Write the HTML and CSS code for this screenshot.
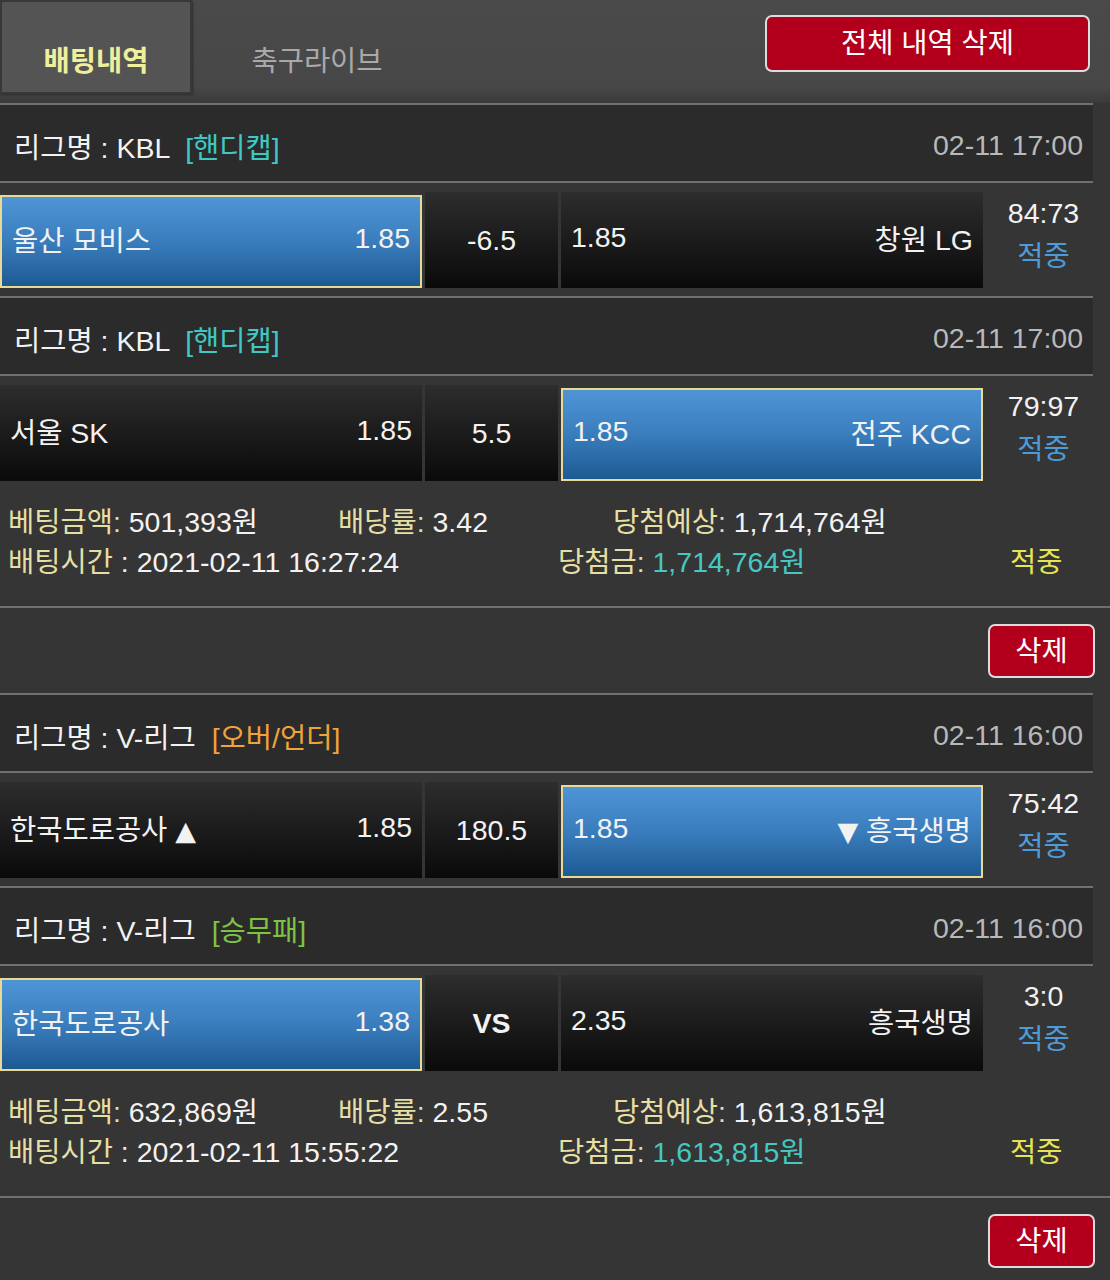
FILE: index.html
```html
<!doctype html>
<html lang="ko">
    <head>
        <meta charset="UTF-8" />
        <meta name="viewport" content="width=device-width, initial-scale=1.0" />
        <title>배팅내역</title>
        <link rel="stylesheet" href="styles.css">
    </head>
    <body>
        <div class="top-bar">
            <div class="tab active">배팅내역</div>
            <div class="tab">축구라이브</div>
            <div class="btn-delete-all">전체 내역 삭제</div>
        </div>

        <!-- bet 1 -->
        <div class="game">
            <div class="league-head">
                <div>리그명 : KBL <span class="type handicap">[핸디캡]</span></div>
                <div class="date">02-11 17:00</div>
            </div>
            <div class="match-row">
                <div class="pick selected"><span>울산 모비스</span><span>1.85</span></div>
                <div class="line-cell">-6.5</div>
                <div class="pick"><span>1.85</span><span>창원 LG</span></div>
                <div class="score"><div>84:73</div><div class="hit">적중</div></div>
            </div>
        </div>
        <div class="game">
            <div class="league-head">
                <div>리그명 : KBL <span class="type handicap">[핸디캡]</span></div>
                <div class="date">02-11 17:00</div>
            </div>
            <div class="match-row last">
                <div class="pick"><span>서울 SK</span><span>1.85</span></div>
                <div class="line-cell">5.5</div>
                <div class="pick selected"><span>1.85</span><span>전주 KCC</span></div>
                <div class="score"><div>79:97</div><div class="hit">적중</div></div>
            </div>
        </div>
        <div class="summary">
            <div class="sum-row">
                <div class="c1"><span class="lbl">베팅금액:</span> 501,393원</div>
                <div class="c2"><span class="lbl">배당률:</span> 3.42</div>
                <div><span class="lbl">당첨예상:</span> 1,714,764원</div>
            </div>
            <div class="sum-row">
                <div class="c1 wide"><span class="lbl">배팅시간</span> : 2021-02-11 16:27:24</div>
                <div class="c3"><span class="lbl">당첨금:</span> <span class="won">1,714,764원</span></div>
                <div class="result">적중</div>
            </div>
        </div>
        <div class="delete-row"><div class="btn-delete">삭제</div></div>

        <!-- bet 2 -->
        <div class="game">
            <div class="league-head">
                <div>리그명 : V-리그 <span class="type overunder">[오버/언더]</span></div>
                <div class="date">02-11 16:00</div>
            </div>
            <div class="match-row">
                <div class="pick"><span>한국도로공사 <span class="tri">▲</span></span><span>1.85</span></div>
                <div class="line-cell">180.5</div>
                <div class="pick selected"><span>1.85</span><span><span class="tri">▼</span> 흥국생명</span></div>
                <div class="score"><div>75:42</div><div class="hit">적중</div></div>
            </div>
        </div>
        <div class="game">
            <div class="league-head">
                <div>리그명 : V-리그 <span class="type winlose">[승무패]</span></div>
                <div class="date">02-11 16:00</div>
            </div>
            <div class="match-row last">
                <div class="pick selected"><span>한국도로공사</span><span>1.38</span></div>
                <div class="line-cell vs">VS</div>
                <div class="pick"><span>2.35</span><span>흥국생명</span></div>
                <div class="score"><div>3:0</div><div class="hit">적중</div></div>
            </div>
        </div>
        <div class="summary">
            <div class="sum-row">
                <div class="c1"><span class="lbl">베팅금액:</span> 632,869원</div>
                <div class="c2"><span class="lbl">배당률:</span> 2.55</div>
                <div><span class="lbl">당첨예상:</span> 1,613,815원</div>
            </div>
            <div class="sum-row">
                <div class="c1 wide"><span class="lbl">배팅시간</span> : 2021-02-11 15:55:22</div>
                <div class="c3"><span class="lbl">당첨금:</span> <span class="won">1,613,815원</span></div>
                <div class="result">적중</div>
            </div>
        </div>
        <div class="delete-row"><div class="btn-delete">삭제</div></div>
    </body>
</html>
```

FILE: styles.css
```css
body {
    margin: 0;
    padding: 0;
    background-color: #353535;
    color: #f2f2f2;
    font-family: "Liberation Sans", "Noto Sans CJK KR", sans-serif;
    font-size: 28.5px;
}

.top-bar {
    display: flex;
    align-items: flex-start;
    height: 103px;
    background: linear-gradient(#4a4a4a, #474747 85%, #3a3a3a);
}

.tab {
    width: 250px;
    height: 94px;
    line-height: 122px;
    text-align: center;
    color: #a9a9a9;
}

.tab.active {
    width: 192px;
    background-color: #545454;
    box-shadow: inset 0 0 0 2px #383838, 1px 1px 2px #2c2c2c;
    color: #eef09c;
    font-weight: bold;
}

.btn-delete-all {
    margin: 15px 20px 0 auto;
    width: 321px;
    height: 53px;
    line-height: 53px;
    text-align: center;
    background-color: #b2001c;
    border: 2px solid #dcdcdc;
    border-radius: 7px;
    color: #fff;
}

.game {
    margin-right: 17px;
    border-top: 2px solid #707070;
}

.league-head {
    display: flex;
    justify-content: space-between;
    align-items: center;
    height: 71px;
    padding: 5px 10px 0 14px;
    background-color: #2b2b2b;
    border-bottom: 2px solid #707070;
}

.type {
    margin-left: 8px;
}
.handicap {
    color: #3fc9c4;
}
.overunder {
    color: #f0a33a;
}
.winlose {
    color: #7ec342;
}

.date {
    color: #b9b9b9;
}

.match-row {
    display: flex;
    gap: 3px;
    padding: 9px 0 8px;
}

.match-row.last {
    padding-bottom: 0;
}

.pick {
    width: 422px;
    height: 96px;
    box-sizing: border-box;
    display: flex;
    justify-content: space-between;
    align-items: center;
    padding: 0 10px 6px;
    background: linear-gradient(#2d2d2d, #0a0a0a);
}

.pick.selected {
    border: 2px solid #e8d995;
    margin-top: 3px;
    height: 93px;
    background: linear-gradient(#4f95d6, #3a7dbd 50%, #1d5a92);
}

.tri {
    font-family: "DejaVu Sans", sans-serif;
    font-size: 27px;
}

.line-cell {
    width: 133px;
    height: 96px;
    line-height: 96px;
    text-align: center;
    background: linear-gradient(#2d2d2d, #0a0a0a);
}

.line-cell.vs {
    font-weight: bold;
}

.score {
    flex: 1;
    padding-left: 8px;
    text-align: center;
    line-height: 43px;
}

.hit {
    color: #4d9bd8;
}

.summary {
    padding: 21px 0 24px 8px;
    border-bottom: 2px solid #707070;
}

.sum-row {
    display: flex;
    height: 40px;
    line-height: 40px;
}

.c1 {
    width: 330px;
}
.c1.wide {
    width: 550px;
}
.c2 {
    width: 275px;
}
.c3 {
    width: 452px;
}

.lbl {
    color: #e6dfa4;
}

.won {
    color: #45c8c2;
}

.result {
    color: #e6e355;
}

.delete-row {
    display: flex;
    justify-content: flex-end;
    padding: 16px 15px 15px 0;
}

.btn-delete {
    width: 103px;
    height: 50px;
    line-height: 50px;
    text-align: center;
    background-color: #b2001c;
    border: 2px solid #dcdcdc;
    border-radius: 7px;
    color: #fff;
}
```
